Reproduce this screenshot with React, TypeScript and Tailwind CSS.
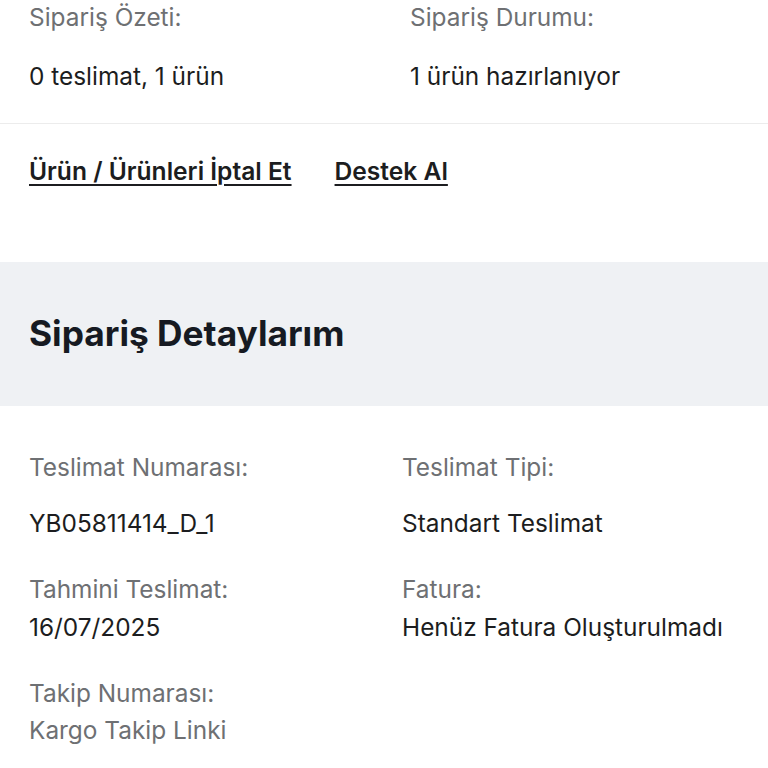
const labelCls = 'text-[24.4px] leading-[28px] text-[#6e7073]';
const valueCls = 'text-[24.4px] leading-[28px] text-[#1c1d20]';

function Field({ label, value, gap }: { label: string; value: string; gap: string }) {
  return (
    <div>
      <div className={labelCls}>{label}</div>
      <div className={`${valueCls} ${gap}`}>{value}</div>
    </div>
  );
}

export default function App() {
  return (
    <div className="w-[768px] h-[768px] overflow-hidden bg-white" style={{ fontFamily: 'Inter, "Noto Sans", sans-serif' }}>
      {/* Summary */}
      <div className="pt-[3px] pb-[33px] pl-[29px] border-b border-[#ececec] grid grid-cols-[381px_1fr]">
        <Field label="Sipariş Özeti:" value="0 teslimat, 1 ürün" gap="mt-[31px]" />
        <Field label="Sipariş Durumu:" value="1 ürün hazırlanıyor" gap="mt-[31px]" />
      </div>

      {/* Actions */}
      <div className="mt-[33px] pl-[29px] flex gap-[43px]">
        <a href="#" className="text-[24.6px] leading-[28px] font-semibold text-[#1c1d20] underline underline-offset-[4px] decoration-[2px]">
          Ürün / Ürünleri İptal Et
        </a>
        <a href="#" className="text-[24.6px] leading-[28px] font-semibold text-[#1c1d20] underline underline-offset-[4px] decoration-[2px]">
          Destek Al
        </a>
      </div>

      {/* Section header */}
      <div className="mt-[77px] h-[144px] bg-[#eff1f4] flex items-center pl-[29px]">
        <h2 className="text-[35.3px] leading-[40px] font-bold text-[#161a22]">Sipariş Detaylarım</h2>
      </div>

      {/* Details */}
      <div className="pt-[47px] pl-[29px] grid grid-cols-[373px_1fr] gap-y-[38px]">
        <Field label="Teslimat Numarası:" value="YB05811414_D_1" gap="mt-[28px]" />
        <Field label="Teslimat Tipi:" value="Standart Teslimat" gap="mt-[28px]" />
        <Field label="Tahmini Teslimat:" value="16/07/2025" gap="mt-[10px]" />
        <Field label="Fatura:" value="Henüz Fatura Oluşturulmadı" gap="mt-[10px]" />
        <div>
          <div className={labelCls}>Takip Numarası:</div>
          <div className={`${labelCls} mt-[9px]`}>Kargo Takip Linki</div>
        </div>
      </div>
    </div>
  );
}
